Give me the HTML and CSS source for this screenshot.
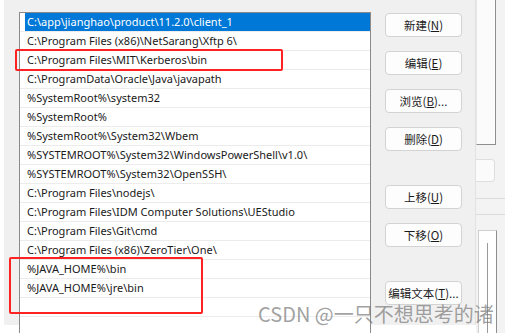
FILE: index.html
```html
<!DOCTYPE html>
<html lang="zh-CN">
<head>
  <meta charset="UTF-8">
  <title>编辑环境变量</title>
  <link rel="stylesheet" href="styles.css">
</head>
<body>

<div class="shot">
  <div class="dialog">
    <div class="pathlist">
      <div class="row selected"><span class="cell">C:\app\jianghao\product\11.2.0\client_1</span></div>
      <div class="row"><span class="cell">C:\Program Files (x86)\NetSarang\Xftp 6\</span></div>
      <div class="row"><span class="cell">C:\Program Files\MIT\Kerberos\bin</span></div>
      <div class="row"><span class="cell">C:\ProgramData\Oracle\Java\javapath</span></div>
      <div class="row"><span class="cell">%SystemRoot%\system32</span></div>
      <div class="row"><span class="cell">%SystemRoot%</span></div>
      <div class="row"><span class="cell">%SystemRoot%\System32\Wbem</span></div>
      <div class="row"><span class="cell">%SYSTEMROOT%\System32\WindowsPowerShell\v1.0\</span></div>
      <div class="row"><span class="cell">%SYSTEMROOT%\System32\OpenSSH\</span></div>
      <div class="row"><span class="cell">C:\Program Files\nodejs\</span></div>
      <div class="row"><span class="cell">C:\Program Files\IDM Computer Solutions\UEStudio</span></div>
      <div class="row"><span class="cell">C:\Program Files\Git\cmd</span></div>
      <div class="row"><span class="cell">C:\Program Files (x86)\ZeroTier\One\</span></div>
      <div class="row"><span class="cell">%JAVA_HOME%\bin</span></div>
      <div class="row"><span class="cell">%JAVA_HOME%\jre\bin</span></div>
      <div class="row"><span class="cell"></span></div>
    </div>

    <div class="buttons">
      <button class="button">新建(<u>N</u>)</button>
      <button class="button">编辑(<u>E</u>)</button>
      <button class="button">浏览(<u>B</u>)...</button>
      <button class="button">删除(<u>D</u>)</button>
      <button class="button group">上移(<u>U</u>)</button>
      <button class="button">下移(<u>O</u>)</button>
      <button class="button group">编辑文本(<u>T</u>)...</button>
    </div>
  </div>

  <div class="behind">
    <div class="behind-top"></div>
    <div class="behind-field"></div>
    <div class="behind-line"></div>
    <div class="behind-line second"></div>
    <div class="behind-box"><div class="behind-bar"></div></div>
  </div>

  <div class="mark mark-one"></div>
  <div class="mark mark-two"></div>
  <div class="watermark">CSDN @一只不想思考的诸</div>
</div>

</body>
</html>
```

FILE: styles.css
```css
body {
  margin: 0;
  background-color: #ffffff;
  font-family: "Noto Sans", "Noto Sans CJK SC", sans-serif;
}

.shot {
  position: relative;
  width: 505px;
  height: 333px;
  display: flex;
  overflow: hidden;
}

.dialog {
  margin-left: 4px;
  width: 456px;
  height: 313px;
  padding: 12px 0 0 15px;
  background-color: #f0f0f0;
  display: flex;
  align-items: flex-start;
  border-right: 1px solid #e2e2e2;
}

.pathlist {
  width: 350px;
  height: 320px;
  background-color: #ffffff;
  border: 1px solid #8a8a8a;
  border-bottom: none;
}

.row {
  height: 18px;
  border-bottom: 1px solid #ececec;
  display: flex;
}

.cell {
  flex: 1;
  margin-left: 5px;
  padding-left: 2px;
  font-size: 11px;
  line-height: 18px;
  color: #1a1a1a;
  white-space: nowrap;
}

.selected .cell {
  background-color: #0078d7;
  color: #ffffff;
}

.buttons {
  margin-left: 14px;
  width: 77px;
  padding-top: 1px;
  display: flex;
  flex-direction: column;
  gap: 14px;
}

.button {
  height: 24px;
  padding: 0;
  background-color: #fdfdfd;
  border: 1px solid #d3d3d3;
  border-radius: 4px;
  font-family: "Noto Sans CJK SC", sans-serif;
  font-size: 11.5px;
  color: #1a1a1a;
}

.button.group {
  margin-top: 20px;
}

.behind {
  width: 29px;
  height: 333px;
  background-color: #f3f3f3;
  display: flex;
  flex-direction: column;
}

.behind-top {
  width: 18px;
  height: 155px;
  background-color: #fbfbfb;
  border-left: 1px solid #e6e6e6;
  border-right: 1px solid #8f8f8f;
  border-bottom: 1px solid #8f8f8f;
}

.behind-field {
  width: 18px;
  height: 23px;
  margin-top: 14px;
  background-color: #fbfbfb;
  border: 1px solid #dedede;
  border-left: none;
  border-radius: 0 4px 4px 0;
}

.behind-line {
  margin-top: 16px;
  height: 1px;
  background-color: #dcdcdc;
}

.behind-line.second {
  margin-top: 15px;
}

.behind-box {
  margin: 15px 0 0 2px;
  width: 17px;
  flex: 1;
  background-color: #ffffff;
  border-left: 1px solid #cfcfcf;
  border-right: 1px solid #8f8f8f;
  border-top: 1px solid #cfcfcf;
}

.behind-bar {
  margin: 12px 0 0 8px;
  width: 1px;
  height: 90px;
  background-color: #9a9a9a;
}

.mark {
  position: absolute;
  border: 2px solid #f22;
  border-radius: 2px;
}

.mark-one {
  left: 15px;
  top: 49px;
  width: 264px;
  height: 18px;
}

.mark-two {
  left: 9px;
  top: 257px;
  width: 190px;
  height: 53px;
}

.watermark {
  position: absolute;
  left: 258px;
  top: 300px;
  font-family: "Noto Sans CJK SC", sans-serif;
  font-size: 20px;
  line-height: 28px;
  color: rgba(120, 120, 120, 0.7);
  white-space: nowrap;
}
```
